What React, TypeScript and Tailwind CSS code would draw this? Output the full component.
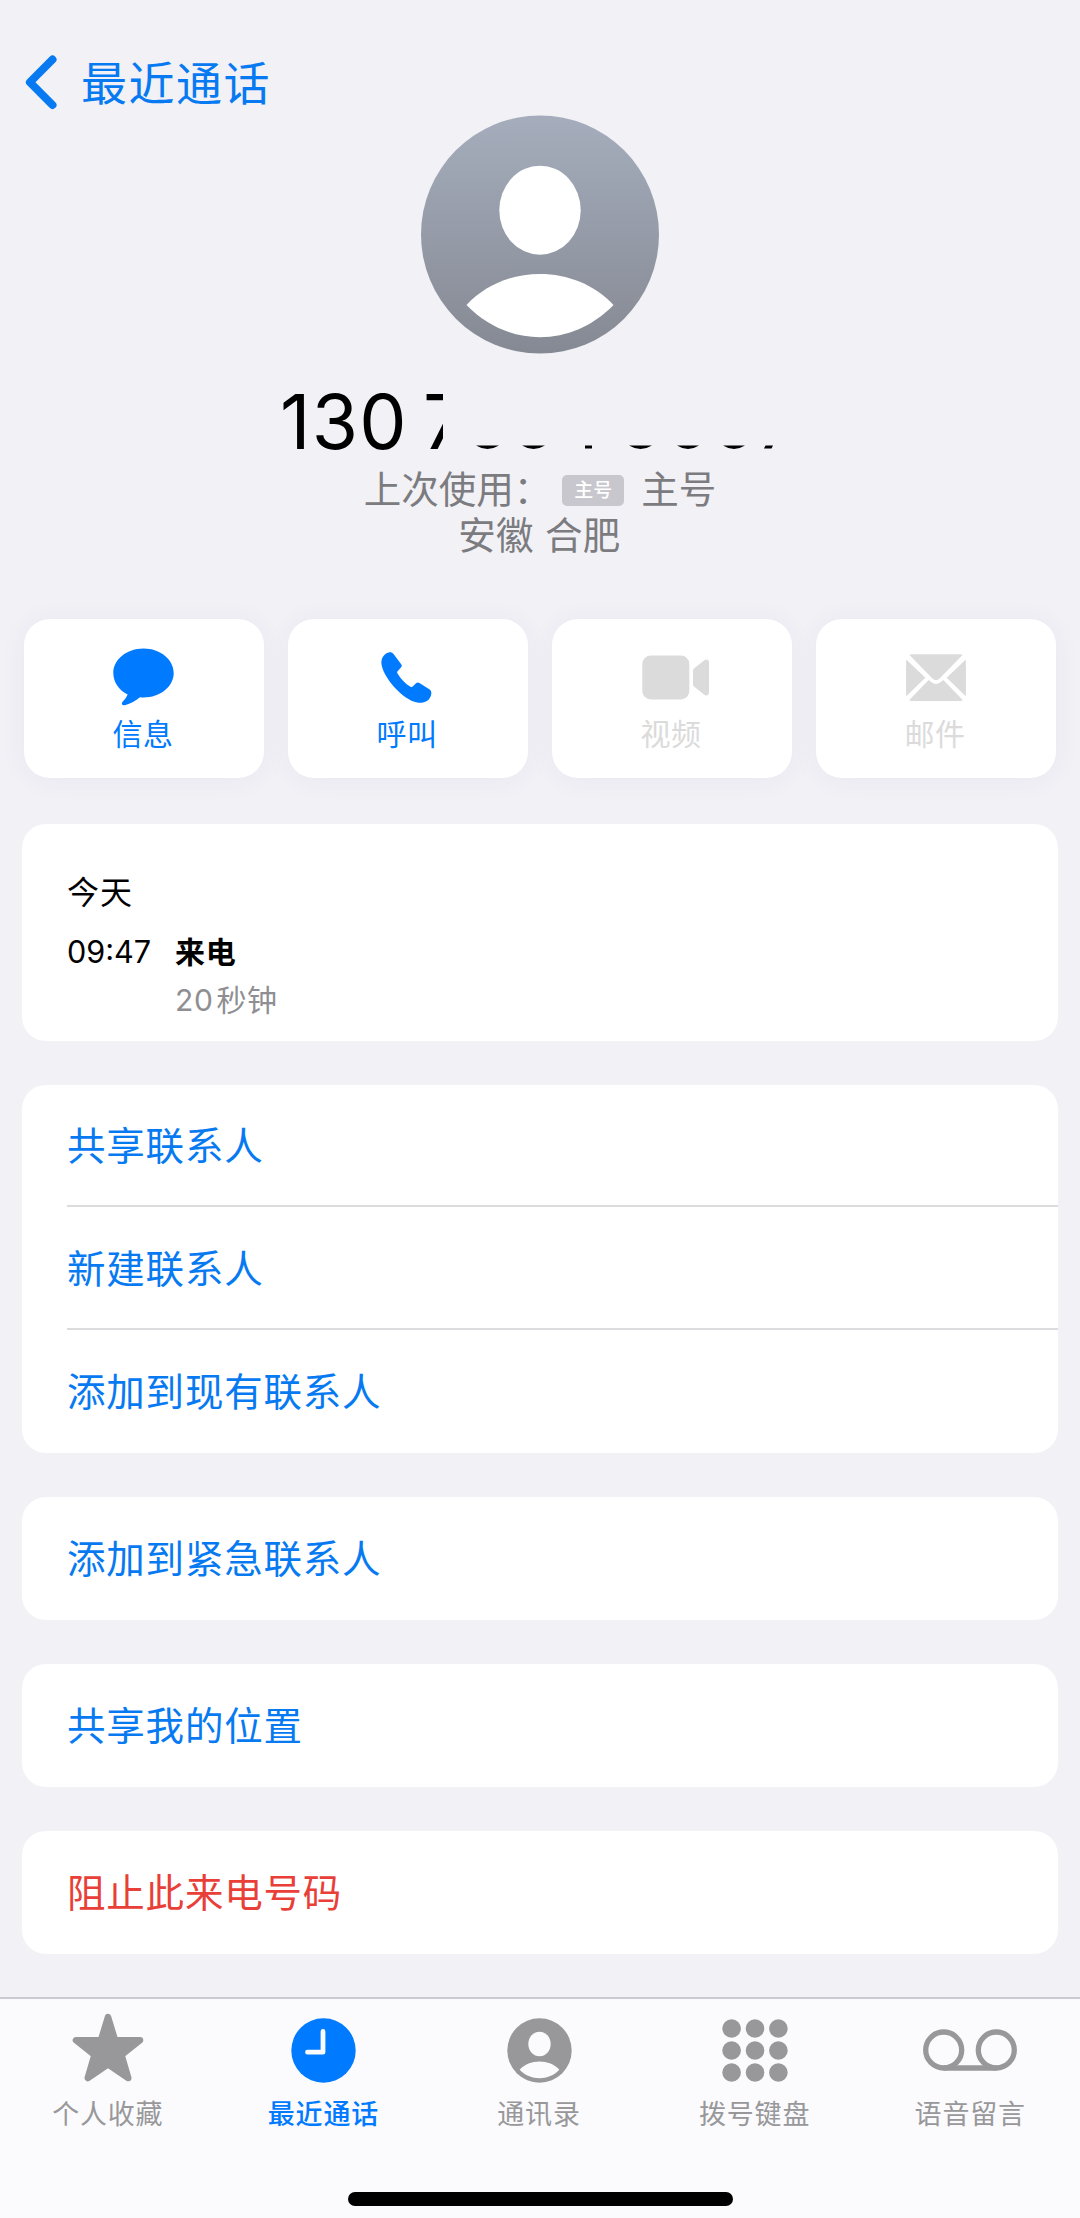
import type { ReactNode } from "react";
import clsx from "clsx";

const MessageIcon = () => (
  <svg className="mr-px" width="61" height="58" viewBox="0 0 61 58" fill="currentColor">
    <path d="M30.500.5C47.200.5 60.700 11.400 60.700 25S47.200 49.500 30.500 49.500c-1.200 0-2.400-.1-3.500-.2-4.300 3.500-9.300 6.600-15.100 7.900-2.700.5-3.900-1.400-2.500-3.100 2.300-2.500 3.600-4 5.300-7.500C6 42.300.3 34 .3 25 .3 11.400 13.800.5 30.500.5Z" />
  </svg>
);

const PhoneIcon = () => (
  <svg className="mr-[2px]" width="51" height="51" viewBox="0 0 51 51" fill="currentColor">
    <path d="M8.600.3C10.500.3 11.900.9 12.900 2.400L20.200 12.200C21 13.400 20.900 14.300 20.100 15.300L16.600 19.200C16 20 16 20.600 16.500 21.400C19.800 26.900 24.200 31.400 29.500 34.800C30.300 35.200 31 35.100 31.600 34.500L35.100 31.300C36.200 30.300 37.200 30.200 38.400 31L48.700 37.600C50.600 39 50.700 41.300 49.800 44C47.800 49.500 42.500 51.600 36.200 50.500C21.500 48 1.500 24.500.4 11.500C.1 6.300 3 1.200 8.600.3Z" />
  </svg>
);

const VideoIcon = () => (
  <svg className="ml-2" width="68" height="45" viewBox="0 0 68 45" fill="currentColor">
    <rect x=".3" y=".5" width="47" height="44" rx="8.500" />
    <path d="M51 15.500c0-.9.300-1.500 1-2.100l10-8c2.300-1.800 5-.8 5 2v30.200c0 2.800-2.700 3.800-5 2l-10-8.100c-.7-.6-1-1.200-1-2.100Z" />
  </svg>
);

const MailIcon = () => (
  <svg width="60" height="47" viewBox="0 0 60 47" fill="currentColor">
    <path d="M3.500 1Q4.300.2 5.500.2h49q1.300 0 2 .8L33.800 24.200Q30 28.200 26.200 24.200Z" />
    <path d="M3.300 46 22.700 25.900l1.800 1.700q5.500 4.800 11 0l1.800-1.700L56.700 46q-.8.900-2.200.9h-49Q4.100 46.900 3.300 46Z" />
    <path d="M.5 5.800 19.300 23.700.5 42.100Q.1 41.500.1 40.500V7.300Q.1 6.400.5 5.800ZM59.500 5.800 40.700 23.700l18.800 18.400q.4-.6.400-1.600V7.300q0-.9-.4-1.500Z" />
  </svg>
);

const StarIcon = () => (
  <svg width="72" height="74" viewBox="0 0 72 74" fill="currentColor">
    <path
      d="M36 4.200 43 27.200H68L49.500 42 56.200 65 36 51.200 15.800 65 22.500 42 4 27.200H29Z"
      stroke="currentColor"
      strokeWidth="6.600"
      strokeLinejoin="round"
    />
  </svg>
);

const ClockIcon = () => (
  <svg width="65" height="65" viewBox="0 0 65 65">
    <circle cx="32.500" cy="32.500" r="32.200" fill="currentColor" />
    <path d="M32 13.500v20.700H16.500" fill="none" stroke="#fbfbfd" strokeWidth="4.800" strokeLinecap="round" strokeLinejoin="round" />
  </svg>
);

const ContactIcon = () => (
  <svg className="ml-px" width="65" height="65" viewBox="0 0 65 65">
    <circle cx="32.500" cy="32.500" r="32.200" fill="currentColor" />
    <ellipse cx="32.500" cy="26" rx="11.200" ry="12.200" fill="#fbfbfd" />
    <path d="M12.700 51.700C22 40.600 43 40.600 52.300 51.700 42 63 23 63 12.700 51.700Z" fill="#fbfbfd" />
  </svg>
);

const KeypadIcon = () => (
  <svg width="66" height="63" viewBox="0 0 66 63" fill="currentColor">
    {[9.5, 31.5, 53.5].map((cy) =>
      [9.6, 33, 56.4].map((cx) => <circle key={`${cx}-${cy}`} cx={cx} cy={cy} r="9.300" />)
    )}
  </svg>
);

const VoicemailIcon = () => (
  <svg width="94" height="42" viewBox="0 0 94 42" fill="none" stroke="currentColor" strokeWidth="5.300">
    <circle cx="20.700" cy="21" r="18" />
    <circle cx="73.300" cy="21" r="18" />
    <path d="M20.700 39h52.600" />
  </svg>
);

const actions = [
  { label: "信息", icon: <MessageIcon />, enabled: true },
  { label: "呼叫", icon: <PhoneIcon />, enabled: true },
  { label: "视频", icon: <VideoIcon />, enabled: false },
  { label: "邮件", icon: <MailIcon />, enabled: false },
];

const tabs = [
  { label: "个人收藏", icon: <StarIcon /> },
  { label: "最近通话", icon: <ClockIcon />, active: true },
  { label: "通讯录", icon: <ContactIcon /> },
  { label: "拨号键盘", icon: <KeypadIcon /> },
  { label: "语音留言", icon: <VoicemailIcon /> },
];

function Group({ children }: { children: ReactNode }) {
  return <section className="overflow-hidden rounded-[24px] bg-white pl-[45px]">{children}</section>;
}

function Row({ label, danger, divider }: { label: string; danger?: boolean; divider?: boolean }) {
  return (
    <button
      className={clsx(
        "flex h-[122.6px] w-full items-center text-left text-[38.5px] tracking-[0.8px]",
        danger ? "text-[#e93f39]" : "text-[#077af2]",
        divider ? "border-b-2 border-[#dcdcde] pt-[4px]" : "pt-[3px]"
      )}
    >
      {label}
    </button>
  );
}

export default function App() {
  return (
    <div
      lang="zh-CN"
      className="flex h-[2218px] w-[1080px] flex-col overflow-hidden bg-[#f1f1f6] font-['Inter','Noto_Sans_CJK_SC',sans-serif] text-black"
    >
      {/* Back link */}
      <header className="flex h-[115px] items-end px-6 pb-[5px] text-[#077af2]">
        <svg width="34" height="56" viewBox="0 0 34 56" fill="none" stroke="currentColor" strokeWidth="8" strokeLinecap="round" strokeLinejoin="round">
          <path d="M28.500 5.500 5.900 28.300l22.600 22.700" />
        </svg>
        <span className="-mb-[3px] ml-[23px] text-[46px] leading-[60px] tracking-[1.5px]">最近通话</span>
      </header>

      {/* Contact */}
      <div className="flex h-[504px] flex-col items-center">
        <svg width="240" height="239" viewBox="0 0 240 239">
          <defs>
            <linearGradient id="avatar" x1="0" y1="0" x2="0" y2="1">
              <stop offset="0" stopColor="#a5adbc" />
              <stop offset="1" stopColor="#858993" />
            </linearGradient>
          </defs>
          <circle cx="120" cy="119.500" r="119" fill="url(#avatar)" />
          <ellipse cx="120" cy="95.200" rx="40.700" ry="44.500" fill="#fff" />
          <path d="M46.500 190C84.500 148.500 155.500 148.500 193.500 190 151.500 233 88.500 233 46.500 190Z" fill="#fff" />
        </svg>

        {/* Number, mostly covered */}
        <div className="mt-[22px] flex h-[91px] w-[520px] items-center text-[75px] leading-[91px]">
          <span className="w-[143px] shrink-0 tracking-[1.2px]">130</span>
          <span className="w-[20px] shrink-0">7</span>
          <svg className="relative shrink-0 bg-[#f1f1f6]" width="332" height="60" viewBox="0 0 332 60" fill="#000">
            <path d="M33 53.500h23q-11.500 7-23 0ZM79 53.500h23q-11.500 7-23 0ZM142 53.500h7v3h-7ZM186 53.500h23q-11.500 7-23 0ZM234 53.500h22q-11 7-22 0ZM280 53.500h22q-11 7-22 0ZM322.500 53.500h7.500l-1.500 3h-7.500Z" />
          </svg>
        </div>

        <div className="flex items-center text-[37.5px] leading-[46px] text-[#7b7b80]">
          <span>上次使用：</span>
          <span className="ml-[11px] flex h-[31px] w-[62px] items-center justify-center rounded-[5px] bg-[#c8c7ce] text-[19px] font-medium leading-none text-white">
            主号
          </span>
          <span className="ml-[17px]">主号</span>
        </div>
        <div className="pr-px text-[37.5px] leading-[46px] tracking-[0.4px] text-[#7b7b80]">安徽 合肥</div>
      </div>

      {/* Actions */}
      <div className="grid grid-cols-4 gap-6 px-6">
        {actions.map((action) => (
          <button
            key={action.label}
            className={clsx(
              "flex h-[159px] flex-col items-center rounded-[26px] bg-white pr-px shadow-[0_2px_28px_rgba(70,60,120,0.05)]",
              action.enabled ? "text-[#007aff]" : "text-[#dbdbdb]"
            )}
          >
            <span className="mt-[26px] flex h-[64px] items-center">{action.icon}</span>
            <span className="mt-[5px] mr-px text-[30px] leading-[40px] tracking-[0.6px]">{action.label}</span>
          </button>
        ))}
      </div>

      <main className="mt-[45.5px] flex flex-col gap-[44.4px] px-[22px]">
        {/* Call history */}
        <Group>
          <div className="h-[217px] pt-[45px]">
            <div className="text-[32px] leading-[48px] tracking-[1px]">今天</div>
            <div className="mt-[11px] flex text-[30px] leading-[48px]">
              <span className="w-[108px] text-[30.6px]">09:47</span>
              <div>
                <div className="font-bold tracking-[0.8px]">来电</div>
                <div className="flex gap-[3px] tracking-[0.6px] text-[#8e8e93]">
                  <span>20</span>
                  <span>秒钟</span>
                </div>
              </div>
            </div>
          </div>
        </Group>

        <Group>
          <Row label="共享联系人" divider />
          <Row label="新建联系人" divider />
          <Row label="添加到现有联系人" />
        </Group>
        <Group>
          <Row label="添加到紧急联系人" />
        </Group>
        <Group>
          <Row label="共享我的位置" />
        </Group>
        <Group>
          <Row label="阻止此来电号码" danger />
        </Group>
      </main>

      {/* Tab bar */}
      <footer className="mt-auto flex h-[221px] flex-col items-center border-t-2 border-[#cbcad2] bg-[#fbfbfd]">
        <nav className="grid w-full grid-cols-5 pr-[2px]">
          {tabs.map((tab) => (
            <button
              key={tab.label}
              className={clsx("flex flex-col items-center", tab.active ? "font-medium text-[#007aff]" : "text-[#98989b]")}
            >
              <span className="mt-[14px] flex h-[74px] items-center">{tab.icon}</span>
              <span className="mt-[10px] text-[27px] leading-[36px] tracking-[0.8px]">{tab.label}</span>
            </button>
          ))}
        </nav>
        <div className="mt-auto mb-3 h-[14px] w-[385px] rounded-full bg-black" />
      </footer>
    </div>
  );
}
